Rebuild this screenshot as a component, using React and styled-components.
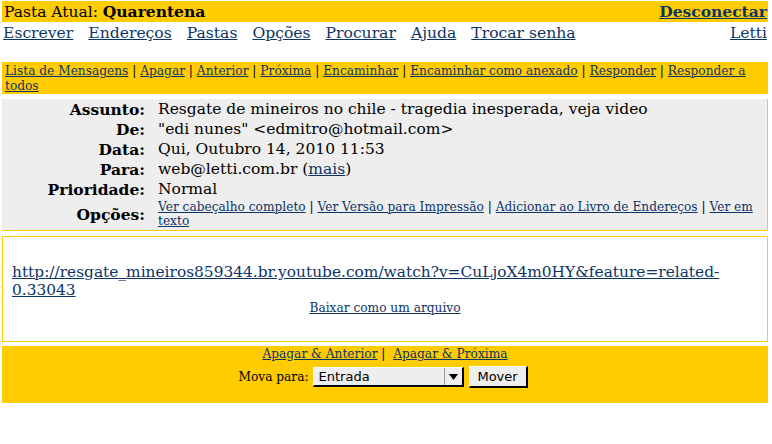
import styled, { createGlobalStyle } from "styled-components";

const GlobalStyle = createGlobalStyle`
  body {
    margin: 0;
    background: #fff;
    font-family: "DejaVu Serif", serif;
    color: #000;
  }
`;

const Page = styled.div`
  padding: 1px 4px 0 2px;
`;

const Link = styled.a`
  color: #0d3466;
  text-decoration: underline;
  cursor: pointer;
`;

// Top bar with current folder and logout

const TopBar = styled.div`
  display: flex;
  justify-content: space-between;
  align-items: center;
  background: #ffcc00;
  height: 21px;
  padding: 0 1px 0 2px;
  font-size: 15.5px;
`;

const Strong = styled.b`
  font-weight: bold;
`;

const NavRow = styled.div`
  display: flex;
  align-items: center;
  height: 22px;
  padding: 0 1px;
  font-size: 15.6px;
  margin-bottom: 18px;
`;

const NavLinks = styled.div`
  display: flex;
  gap: 15px;
  flex: 1;
`;

const Toolbar = styled.div`
  background: #ffcc00;
  padding: 2px 18px 0 3px;
  font-size: 12.2px;
  line-height: 15px;
  min-height: 30px;
`;

const HeaderBox = styled.div`
  margin-top: 5px;
  background: #eeeeee;
  border-right: 1px solid #ffcc00;
  border-bottom: 1px solid #ffcc00;
  display: grid;
  grid-template-columns: 143px 1fr;
  column-gap: 13px;
  font-size: 15.5px;
  padding-bottom: 1px;
`;

const Label = styled.div`
  font-weight: bold;
  display: flex;
  align-items: center;
  justify-content: flex-end;
  height: ${(p) => (p.$tall ? "30px" : "20px")};
`;

const Value = styled.div`
  display: flex;
  align-items: center;
  white-space: nowrap;
  height: 20px;
`;

const Options = styled.div`
  font-size: 12.2px;
  line-height: 14px;
  padding-right: 8px;
  align-self: center;
`;

const Body = styled.div`
  margin-top: 5px;
  border: 1px solid #ffcc00;
  padding: 26px 9px 25px 9px;
  font-size: 15.4px;
  line-height: 18px;
`;

const Download = styled.div`
  text-align: center;
  font-size: 12.2px;
  line-height: 16px;
  margin-top: 1px;
`;

const BottomBar = styled.div`
  margin-top: 4px;
  background: #ffcc00;
  padding: 0 0 15px;
  text-align: center;
  font-size: 12.2px;
`;

const BottomLinks = styled.div`
  line-height: 16px;
`;

const MoveRow = styled.div`
  display: flex;
  justify-content: center;
  align-items: center;
  gap: 4px;
  margin-top: 4px;
  padding-right: 4px;
`;

const Select = styled.div`
  display: flex;
  align-items: stretch;
  width: 151px;
  height: 20px;
  box-sizing: border-box;
  background: #eeeeee;
  border-top: 1px solid #fff;
  border-left: 1px solid #fff;
  border-right: 2px solid #000;
  border-bottom: 2px solid #000;
  font-family: "DejaVu Sans", sans-serif;
  font-size: 13px;
`;

const SelectText = styled.span`
  flex: 1;
  text-align: left;
  padding-left: 5px;
  line-height: 17px;
`;

const Arrow = styled.span`
  width: 17px;
  border-left: 1px solid #999;
  display: flex;
  align-items: center;
  justify-content: center;
`;

const Button = styled.button`
  height: 22px;
  width: 59px;
  box-sizing: border-box;
  background: #eeeeee;
  border-top: 1px solid #fff;
  border-left: 1px solid #fff;
  border-right: 2px solid #000;
  border-bottom: 2px solid #000;
  font-family: "DejaVu Sans", sans-serif;
  font-size: 13px;
  padding: 0;
  margin-left: 1px;
`;

const headers = [
  ["Assunto:", "Resgate de mineiros no chile - tragedia inesperada, veja video"],
  ["De:", '"edi nunes" <edmitro@hotmail.com>'],
  ["Data:", "Qui, Outubro 14, 2010 11:53"],
];

export default function App() {
  return (
    <Page>
      <GlobalStyle />
      <TopBar>
        <span>
          Pasta Atual: <Strong>Quarentena</Strong>
        </span>
        <Link>
          <Strong>Desconectar</Strong>
        </Link>
      </TopBar>
      <NavRow>
        <NavLinks>
          <Link>Escrever</Link>
          <Link>Endereços</Link>
          <Link>Pastas</Link>
          <Link>Opções</Link>
          <Link>Procurar</Link>
          <Link>Ajuda</Link>
          <Link>Trocar senha</Link>
        </NavLinks>
        <Link>Letti</Link>
      </NavRow>
      <Toolbar>
        <Link>Lista de Mensagens</Link> | <Link>Apagar</Link> |{" "}
        <Link>Anterior</Link> | <Link>Próxima</Link> | <Link>Encaminhar</Link> |{" "}
        <Link>Encaminhar como anexado</Link> | <Link>Responder</Link> |{" "}
        <Link>Responder a todos</Link>
      </Toolbar>
      <HeaderBox>
        {headers.map(([label, value]) => [
          <Label key={label}>{label}</Label>,
          <Value key={label + "v"}>{value}</Value>,
        ])}
        <Label>Para:</Label>
        <Value>
          web@letti.com.br (<Link>mais</Link>)
        </Value>
        <Label>Prioridade:</Label>
        <Value>Normal</Value>
        <Label $tall>Opções:</Label>
        <Options>
          <Link>Ver cabeçalho completo</Link> |{" "}
          <Link>Ver Versão para Impressão</Link> |{" "}
          <Link>Adicionar ao Livro de Endereços</Link> | <Link>Ver em texto</Link>
        </Options>
      </HeaderBox>
      <Body>
        <Link>
          http://resgate_mineiros859344.br.youtube.com/watch?v=CuLjoX4m0HY&amp;feature=related-
          <br />
          0.33043
        </Link>
        <Download>
          <Link>Baixar como um arquivo</Link>
        </Download>
      </Body>
      <BottomBar>
        <BottomLinks>
          <Link>Apagar &amp; Anterior</Link> |&nbsp; <Link>Apagar &amp; Próxima</Link>
        </BottomLinks>
        <MoveRow>
          Mova para:
          <Select>
            <SelectText>Entrada</SelectText>
            <Arrow>
              <svg width="9" height="6" viewBox="0 0 9 6">
                <path d="M0 0h9L4.5 6z" fill="#000" />
              </svg>
            </Arrow>
          </Select>
          <Button>Mover</Button>
        </MoveRow>
      </BottomBar>
    </Page>
  );
}
